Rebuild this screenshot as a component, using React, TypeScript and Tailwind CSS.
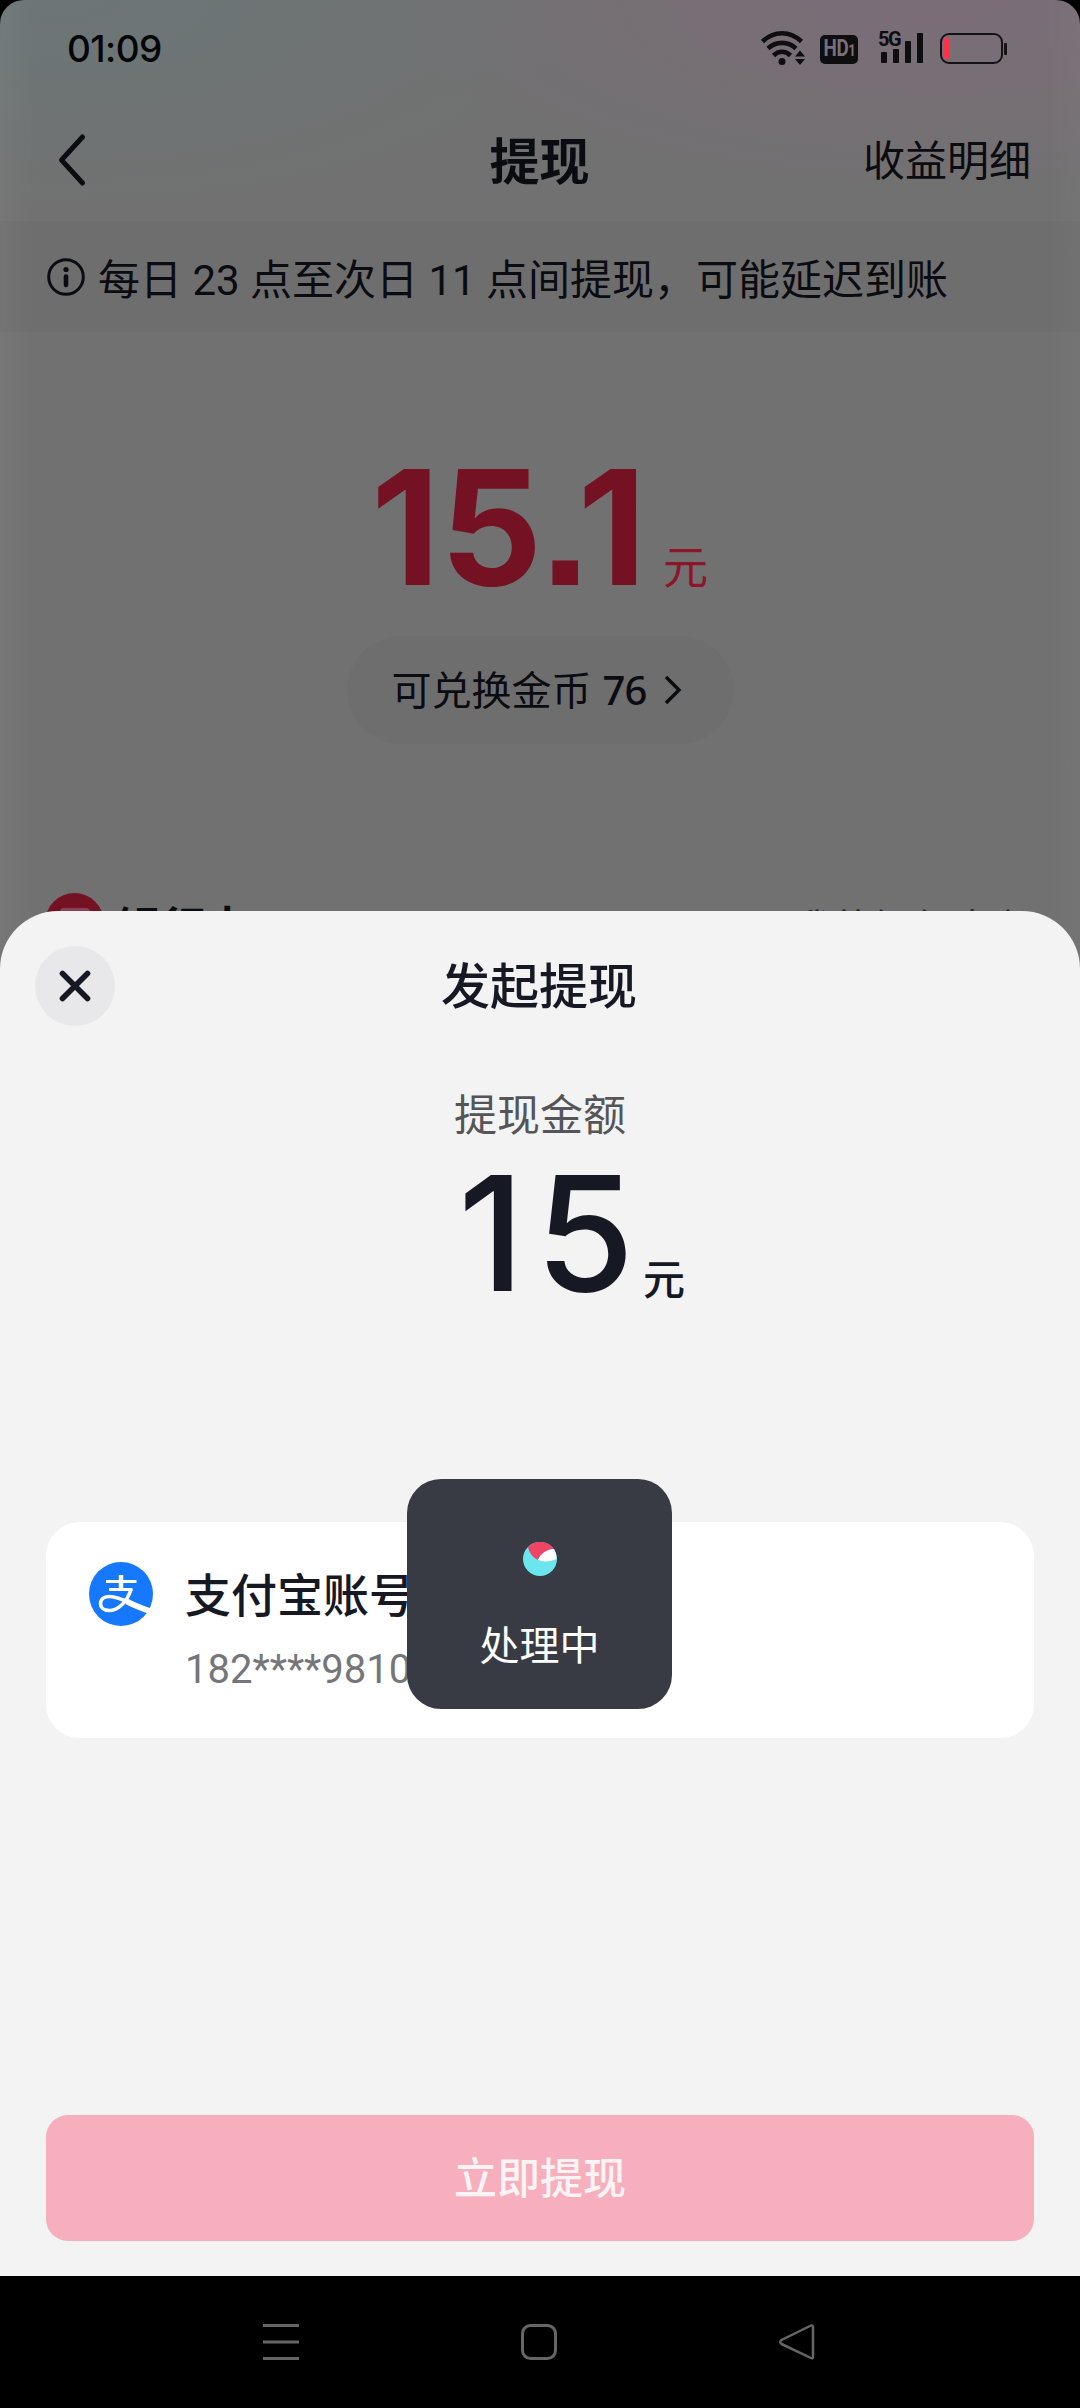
import type { ReactNode } from "react";

function StatusBar() {
  return (
    <div className="h-[94px] shrink-0 flex items-start justify-between pl-[67px] pr-[73px]">
      <span className="h-[94px] leading-[97px] font-[Inter] font-medium text-[37px] tracking-[-0.6px] text-[#050607]">
        01:09
      </span>
      <div className="flex items-start pt-[30px]">
        <svg width="46" height="37" viewBox="0 0 46 37" fill="none">
          <g stroke="#0e0d10" strokeWidth="4.600">
            <path d="M1.500 11.500C13 0.500 29 0.500 40.500 11.500" />
            <path d="M7 18.500C15 11 27 11 35 18.500" />
            <path d="M12.500 25.500C17.500 20.500 24.500 20.500 29.500 25.500" />
          </g>
          <circle cx="21" cy="31.500" r="3.500" fill="#0e0d10" />
          <path d="M34 26.500L39 20.500L44 26.500ZM34 29L39 35L44 29Z" fill="#0e0d10" />
        </svg>
        <span className="mt-[5px] ml-[13px] w-[38px] h-[29px] rounded-[5px] bg-[#0e0d10] text-[#77707a] flex items-center justify-center">
          <span className="flex items-baseline scale-x-[0.82] leading-[29px] font-[Roboto] font-bold text-[23px] tracking-[-0.5px]">
            HD<small className="text-[16px]">1</small>
          </span>
        </span>
        <div className="relative ml-[20px] w-[47px] h-[34px]">
          <span className="absolute left-0 -top-[1px] leading-[20px] font-[Roboto] font-bold text-[20px] tracking-[-1.5px] text-[#0e0d10]">
            5G
          </span>
          <div className="h-[33px] flex items-end gap-[6px] pl-[3px]">
            <i className="w-[6px] h-[11px] rounded-[1px] bg-[#0e0d10]" />
            <i className="w-[6px] h-[14px] rounded-[1px] bg-[#0e0d10]" />
            <i className="w-[6px] h-[22px] rounded-[1px] bg-[#0e0d10]" />
            <i className="w-[6px] h-[30px] rounded-[1px] bg-[#0e0d10]" />
          </div>
        </div>
        <div className="ml-[15px] mt-[3px] flex items-center">
          <div className="w-[63px] h-[31px] rounded-[9px] border-[2px] border-[#151216] pl-[2px] flex items-center">
            <i className="w-[6px] h-[21px] rounded-[2px] bg-[#fb3348]" />
          </div>
          <i className="ml-[1px] w-[3px] h-[12px] rounded-[1px] bg-[#151216]" />
        </div>
      </div>
    </div>
  );
}

function PageHeader() {
  return (
    <div className="h-[127px] shrink-0 flex items-center justify-between pl-[57px] pr-[49px] text-[#0b0c11]">
      <svg width="30" height="54" viewBox="0 0 30 54" fill="none" className="mr-[129px] mt-[4px]">
        <path d="M25.500 4L4.500 27L25.500 50" stroke="currentColor" strokeWidth="5" strokeLinecap="round" strokeLinejoin="round" />
      </svg>
      <h1 className="pt-[10px] text-[50px] font-bold leading-[60px]">提现</h1>
      <span className="pt-[9px] text-[42px] leading-[60px]">收益明细</span>
    </div>
  );
}

function Notice({ children }: { children: ReactNode }) {
  return (
    <div className="h-[111px] shrink-0 flex items-center pl-[47px] bg-black/[0.025] text-[42px] text-[#0b0c11]">
      <svg width="38" height="38" viewBox="0 0 38 38" fill="none" className="mr-[13px]">
        <circle cx="19" cy="19" r="17.300" stroke="currentColor" strokeWidth="3" />
        <circle cx="19" cy="11.500" r="2.600" fill="currentColor" />
        <path d="M19 18.500V27" stroke="currentColor" strokeWidth="4.600" strokeLinecap="round" />
      </svg>
      <span className="pt-[9px] leading-[60px] whitespace-nowrap">{children}</span>
    </div>
  );
}

function Balance() {
  return (
    <div className="h-[560px] shrink-0 flex flex-col items-center">
      <div className="mt-[115px] h-[160px] w-full pl-[371px] flex items-start">
        <span className="w-[292px] leading-[160px] font-[Inter] [font-feature-settings:'ss07'] font-bold text-[160px] text-[#741224]">
          15.1
        </span>
        <span className="mt-[90px] leading-[64px] text-[45px] text-[#8d1529]">元</span>
      </div>
      <div className="mt-[29px] w-[387px] h-[108px] rounded-full bg-black/[0.02] flex items-center pl-[45px] text-[40px] text-[#0b0c11]">
        <span className="pt-[4px] leading-[60px]">可兑换金币</span>
        <span className="ml-[11px] leading-[58px] font-['Noto_Sans'] font-medium text-[40px] tracking-[-0.8px]">76</span>
        <svg width="18" height="32" viewBox="0 0 18 32" fill="none" className="ml-[17px]">
          <path d="M2 3L15 16L2 29" stroke="currentColor" strokeWidth="3.400" />
        </svg>
      </div>
    </div>
  );
}

function BankRow() {
  return (
    <div className="h-[60px] shrink-0 flex items-start pl-[45px] pr-[59px]">
      <span className="mt-[1px] w-[59px] h-[59px] rounded-full bg-[#741224] flex justify-center pt-[15px]">
        <i className="w-[30px] h-[24px] rounded-[4px] bg-[#8a4450]" />
      </span>
      <span className="ml-[12px] mt-[8px] text-[45px] font-bold leading-[60px] text-[#0b0c11]">银行卡</span>
      <span className="ml-auto mt-[8px] text-[40px] leading-[60px] text-[#232326]">我的银行卡</span>
      <svg width="16" height="30" viewBox="0 0 16 30" fill="none" className="ml-[12px] mt-[15px]">
        <path d="M2 3L13 15L2 27" stroke="#232326" strokeWidth="3" />
      </svg>
    </div>
  );
}

function AlipayIcon() {
  return (
    <svg width="64" height="64" viewBox="0 0 64 64" fill="none">
      <circle cx="32" cy="32" r="32" fill="#1677ff" />
      <g stroke="white">
        <path d="M17 19.500H47.500M20 27.500H43.500" strokeWidth="2.800" />
        <path d="M32 13V28" strokeWidth="4.500" />
        <path d="M42 27.500C38 40 29 48.500 20 48.500C14 48.500 11.500 45 11.500 41.500C11.500 37 15.500 34.500 21 34.500C30 34.500 40 41 61 49" strokeWidth="3.600" />
        <path d="M38 39.500C44 43 52 46 60.500 49" strokeWidth="6" />
      </g>
    </svg>
  );
}

function Toast() {
  return (
    <div className="absolute left-[407px] top-[1479px] w-[265px] h-[230px] rounded-[34px] bg-[#393b44] flex flex-col items-center">
      <svg width="34" height="34" viewBox="0 0 34 34" className="mt-[63px]">
        <circle cx="17" cy="17" r="17" fill="#6ce6ee" />
        <path d="M5 5A17 17 0 0 1 31 7C24 8 18 12 15 18C9 15 6 10 5 5Z" fill="#ee4567" />
        <path d="M31 7A17 17 0 0 1 33.500 17C27 20 20 20 15 18C18 11 24 7 31 7Z" fill="white" />
      </svg>
      <span className="mt-[41px] text-[40px] leading-[60px] text-white">处理中</span>
    </div>
  );
}

function WithdrawSheet() {
  return (
    <div className="absolute inset-x-0 top-[911px] h-[1365px] rounded-t-[58px] bg-[#f3f3f3] flex flex-col px-[46px] text-[#161823]">
      <div className="h-[150px] -ml-[11px] flex items-center">
        <button className="w-[80px] h-[80px] rounded-full bg-[#e8e8eb] flex items-center justify-center">
          <svg width="36" height="36" viewBox="0 0 36 36" fill="none">
            <path d="M5.500 5.500L30.500 30.500M30.500 5.500L5.500 30.500" stroke="#161823" strokeWidth="5.600" strokeLinecap="round" />
          </svg>
        </button>
        <h2 className="flex-1 pt-[3px] pr-[71px] text-center text-[49px] font-medium leading-[60px]">发起提现</h2>
      </div>

      <p className="mt-[25px] text-center text-[43px] leading-[60px] text-[#555558]">提现金额</p>
      <div className="mt-[7px] h-[160px] pl-[412px] flex items-start">
        <span className="w-[185px] leading-[160px] font-[Inter] font-medium text-[160px] tracking-[11px]">15</span>
        <span className="mt-[98px] leading-[60px] text-[42px] font-medium">元</span>
      </div>

      <div className="mt-[209px] h-[216px] rounded-[34px] bg-white flex items-start pl-[43px] pt-[40px]">
        <AlipayIcon />
        <div className="ml-[32px] pt-[2px] flex flex-col">
          <span className="text-[46px] leading-[64px] font-medium">支付宝账号</span>
          <span className="mt-[14px] text-[40px] leading-[56px] text-[#757679]">182****9810</span>
        </div>
      </div>

      <button className="mt-auto mb-[35px] h-[126px] rounded-[22px] bg-[#f7afbd] pt-[3px] text-[43px] font-medium text-[#fbf3f4]">
        立即提现
      </button>
    </div>
  );
}

function NavBar() {
  return (
    <div className="h-[132px] shrink-0 bg-black flex items-center justify-center gap-[218px] pr-[2px] text-[#666666]">
      <svg width="40" height="40" viewBox="0 0 40 40" fill="none" stroke="currentColor" strokeWidth="3">
        <path d="M2 3.500H38M2 20H38M2 36.500H38" />
      </svg>
      <svg width="40" height="40" viewBox="0 0 40 40" fill="none" stroke="currentColor" strokeWidth="3">
        <rect x="3.500" y="3.500" width="33" height="33" rx="8" />
      </svg>
      <svg width="40" height="40" viewBox="0 0 40 40" fill="none" stroke="currentColor" strokeWidth="2.500" strokeLinejoin="round">
        <path d="M34 3.500Q36 3 36 5V35Q36 37 34 36L4.500 22Q2 20 4.500 18Z" />
      </svg>
    </div>
  );
}

export default function App() {
  return (
    <div className="relative w-[1080px] h-[2408px] overflow-hidden bg-black flex flex-col font-[Roboto,'Noto_Sans_CJK_SC',sans-serif]">
      <div className="h-[2276px] shrink-0 overflow-hidden rounded-t-[24px] bg-[#717171] bg-[linear-gradient(to_right,#ffffff0a,transparent_36px,transparent_1044px,#ffffff06),radial-gradient(ellipse_520px_210px_at_60px_0,#6c7677,transparent),radial-gradient(ellipse_560px_200px_at_940px_0,#7b6d78,transparent)] flex flex-col">
        <StatusBar />
        <PageHeader />
        <Notice>每日 23 点至次日 11 点间提现，可能延迟到账</Notice>
        <Balance />
        <BankRow />
      </div>
      <NavBar />
      <WithdrawSheet />
      <Toast />
    </div>
  );
}
